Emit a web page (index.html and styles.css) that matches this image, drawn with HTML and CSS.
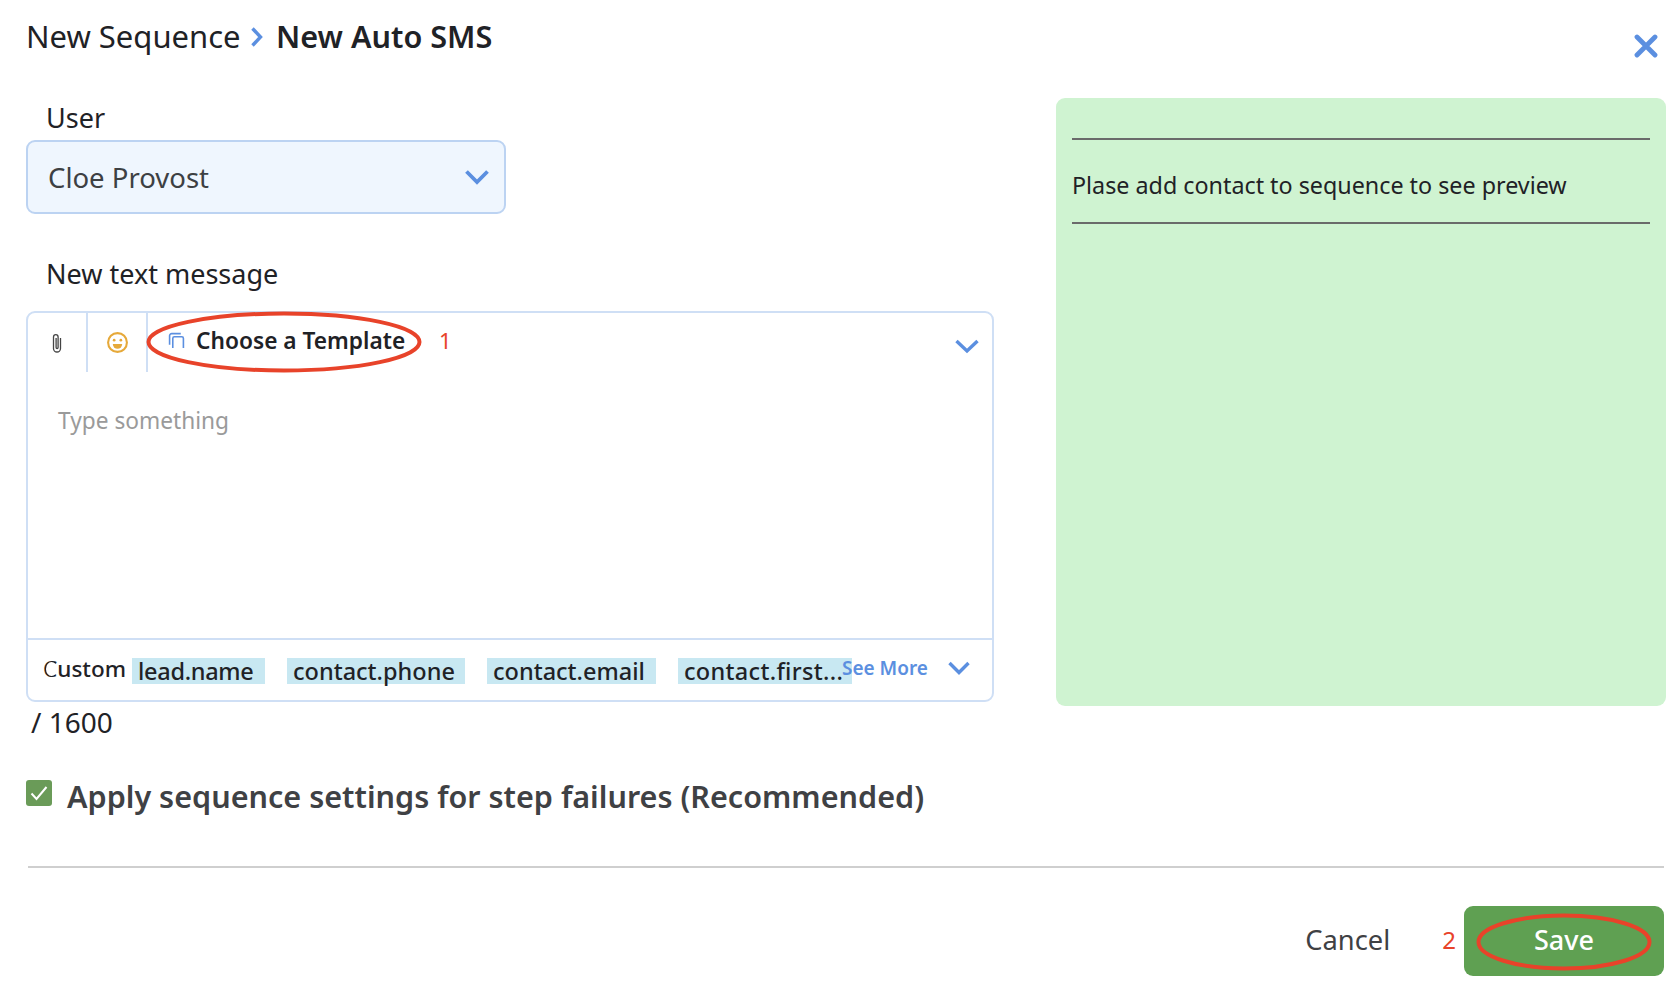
FILE: index.html
```html
<!DOCTYPE html>
<html lang="en">
<head>
<meta charset="utf-8">
<title>New Auto SMS</title>
<link rel="stylesheet" href="styles.css">
</head>
<body>
<div class="page">
  <header class="head">
    <h1 class="crumbs">
      <span class="crumb">New Sequence</span>
      <svg class="crumb-sep" viewBox="0 0 14 22" width="14" height="22"><path d="M2.500 2.500l8 8.500-8 8.500" fill="none" stroke="#5b8fe0" stroke-width="3.400"/></svg>
      <span class="crumb-current">New Auto SMS</span>
    </h1>
    <svg class="close" viewBox="0 0 24 24" width="24" height="24"><path d="M3 3l18 18M21 3L3 21" fill="none" stroke="#5b8fe0" stroke-width="4.800" stroke-linecap="round"/></svg>
  </header>
  <div class="main">
    <section class="form">
      <label class="label label-user">User</label>
      <div class="select">
        <span>Cloe Provost</span>
        <svg viewBox="0 0 26 18" width="26" height="18"><path d="M2.500 3.500L13 14 23.500 3.500" fill="none" stroke="#5b8fe0" stroke-width="3.800"/></svg>
      </div>
      <label class="label label-msg">New text message</label>
      <div class="editor">
        <div class="toolbar">
          <div class="tool">
            <svg viewBox="0 0 14 22" width="14" height="22"><path d="M10.500 6v10.500a3.500 3.500 0 0 1-7 0V5a2.300 2.300 0 0 1 4.600 0v10.500a1 1 0 0 1-2 0V6" fill="none" stroke="#444" stroke-width="1.300"/></svg>
          </div>
          <div class="tool">
            <svg viewBox="0 0 22 22" width="23" height="23"><circle cx="11" cy="11" r="9" fill="none" stroke="#e6a93a" stroke-width="2"/><circle cx="7.800" cy="8.800" r="1.300" fill="#e6a93a"/><circle cx="14.200" cy="8.800" r="1.300" fill="#e6a93a"/><path d="M6.500 12.500h9a4.500 4.500 0 0 1-9 0z" fill="#e6a93a"/></svg>
          </div>
          <div class="template">
            <svg viewBox="0 0 16 16" width="17" height="17"><path d="M1.500 12V3.500a2 2 0 0 1 2-2H12M4.500 15V6a1.500 1.500 0 0 1 1.500-1.500h7A1.500 1.500 0 0 1 14.500 6v9" fill="none" stroke="#5b8fe0" stroke-width="1.500"/></svg>
            <span>Choose a Template</span>
          </div>
          <svg class="tool-chev" viewBox="0 0 26 16" width="26" height="16"><path d="M2.500 3l10.500 10L23.500 3" fill="none" stroke="#5b8fe0" stroke-width="3.400"/></svg>
          <svg class="ellipse ellipse-tpl" viewBox="0 0 276 62" width="276" height="62"><ellipse cx="138" cy="31" rx="135.500" ry="28.500" fill="none" stroke="#e8432a" stroke-width="4"/></svg>
          <span class="mark mark-1">1</span>
        </div>
        <div class="body">Type something</div>
        <div class="fields">
          <span class="custom">Custom</span>
          <span class="tag tag-lead">lead.name</span>
          <span class="tag tag-phone">contact.phone</span>
          <span class="tag tag-email">contact.email</span>
          <span class="tag tag-first">contact.first...</span>
          <span class="more">See More</span>
          <svg class="more-chev" viewBox="0 0 24 16" width="24" height="16"><path d="M2.500 3l9.500 9.500L21.500 3" fill="none" stroke="#5b8fe0" stroke-width="3.400"/></svg>
        </div>
      </div>
      <div class="count">/ 1600</div>
      <div class="apply">
        <span class="check"><svg viewBox="0 0 26 26" width="26" height="26"><path d="M5.500 13.500l5 5.500 10-12" fill="none" stroke="#fff" stroke-width="2"/></svg></span>
        <span class="apply-text">Apply sequence settings for step failures (Recommended)</span>
      </div>
    </section>
    <aside class="preview">
      <p class="preview-text">Plase add contact to sequence to see preview</p>
    </aside>
  </div>
  <footer class="foot">
    <span class="cancel">Cancel</span>
    <span class="mark mark-2">2</span>
    <button class="save">Save
      <svg class="ellipse ellipse-save" viewBox="0 0 176 58" width="176" height="58"><ellipse cx="88" cy="29" rx="85.500" ry="26.500" fill="none" stroke="#e8432a" stroke-width="4"/></svg>
    </button>
  </footer>
</div>
<div class="strip"></div>
</body>
</html>
```
FILE: styles.css
```css
* { box-sizing: border-box; }
html, body { margin: 0; height: 100%; background: #fff; }
body { font-family: "Noto Sans", "Open Sans", sans-serif; color: #1f2226; overflow: hidden; position: relative; }
.page { width: 1680px; padding: 0 14px 0 26px; }
.head { height: 98px; display: flex; justify-content: space-between; align-items: flex-start; }
.crumbs { margin: 15px 0 0; display: flex; align-items: center; font-size: 31px; line-height: 42px; font-weight: 400; }
.crumb { width: 214px; white-space: nowrap; }
.crumb-sep { margin: 2px 0 0 10px; }
.crumb-current { margin-left: 12px; font-size: 30.600px; font-weight: 600; white-space: nowrap; }
.close { margin: 34px 8px 0 0; }
.main { display: flex; justify-content: space-between; align-items: flex-start; }
.form { width: 968px; }
.label { display: block; font-size: 27px; line-height: 36px; padding-left: 20px; }
.label-user { margin-top: 2px; height: 40px; }
.label-msg { margin-top: 36px; height: 61px; padding-top: 6px; }
.select { width: 480px; height: 74px; padding: 0 14px 0 20px; display: flex; align-items: center; justify-content: space-between; background: #eff6fe; border: 2px solid #bcd3f2; border-radius: 9px; font-size: 27.500px; color: #3d4043; }
.editor { width: 968px; height: 391px; border: 2px solid #cfdff5; border-radius: 9px; display: flex; flex-direction: column; }
.toolbar { height: 59px; display: flex; align-items: center; position: relative; }
.tool { width: 60px; height: 59px; display: flex; align-items: center; justify-content: center; border-right: 2px solid #cfdff5; }
.template { display: flex; align-items: center; gap: 11px; margin: -5px 0 0 20px; font-size: 22.700px; font-weight: 600; white-space: nowrap; }
.tool-chev { margin: 6px 12px 0 auto; }
.ellipse { position: absolute; }
.ellipse-tpl { left: 118px; top: -2px; }
.mark { color: #e8432a; font-size: 22px; }
.mark-1 { position: absolute; left: 411px; top: 12px; }
.body { flex: 1; padding: 33px 30px; font-size: 22.700px; color: #9a9a9a; }
.fields { height: 62px; border-top: 2px solid #cfdff5; padding: 0 21px 0 15px; display: flex; align-items: center; position: relative; font-size: 24px; }
.custom { position: relative; width: 89px; font-size: 22.500px; font-weight: 500; margin-top: -3px; }
.custom::before { content: ""; position: absolute; left: 3px; top: 9px; width: 11px; height: 14px; background: #fff; border-radius: 50%; }
.tag { background: #c8e8f2; height: 26px; line-height: 26px; padding-left: 6px; white-space: nowrap; font-size: 23.500px; font-weight: 500; margin: 1px 22px 0 0; }
.tag-lead { width: 133px; letter-spacing: -.3px; }
.tag-phone { width: 178px; }
.tag-email { width: 169px; }
.tag-first { width: 174px; margin-right: 0; letter-spacing: .3px; }
.more { margin-left: -10px; color: #5b8fe0; font-size: 19px; font-weight: 600; white-space: nowrap; margin-top: -4px; z-index: 1; }
.more-chev { margin: -4px 0 0 auto; }
.count { font-size: 28px; padding: 1px 0 0 5px; line-height: 38px; height: 39px; }
.apply { margin-top: 33px; display: flex; align-items: flex-start; font-size: 30.550px; font-weight: 600; color: #3f4144; }
.check { width: 26px; height: 26px; background: #6a9b58; border-radius: 3px; flex: none; margin-top: 6px; }
.check svg { display: block; }
.apply-text { margin-left: 15px; line-height: 44px; white-space: nowrap; }
.preview { width: 610px; height: 608px; background: #cff3d1; border-radius: 9px; padding: 0 16px; }
.preview-text { margin: 40px 0 0; height: 86px; border-top: 2px solid #6a6a6a; border-bottom: 2px solid #6a6a6a; font-size: 23.300px; line-height: 91px; white-space: nowrap; }
.foot { position: absolute; left: 28px; right: 16px; top: 866px; height: 110px; border-top: 2px solid #cfcfcf; display: flex; justify-content: flex-end; align-items: flex-end; }
.cancel { font-size: 27.300px; color: #3f4144; line-height: 68px; height: 70px; margin-right: 52px; }
.mark-2 { line-height: 68px; height: 70px; font-size: 24px; margin-right: 8px; }
.save { position: relative; width: 200px; height: 70px; border: 0; border-radius: 9px; background: #5fa052; color: #fff; font: 500 27px "Noto Sans", sans-serif; padding: 0 0 3px; }
.ellipse-save { left: 12px; top: 7px; }
.strip { position: absolute; left: 0; right: 0; top: 976px; bottom: 0; background: #fafafa; z-index: -1; }
```
